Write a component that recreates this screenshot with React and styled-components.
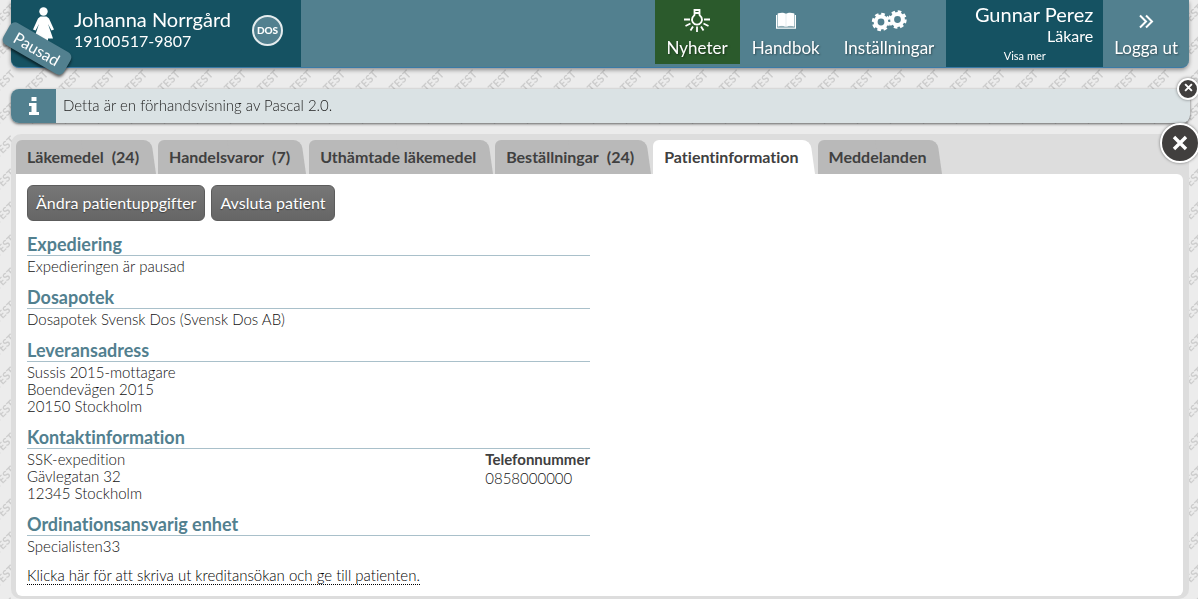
import React from "react";
import styled, { createGlobalStyle, css } from "styled-components";

const GlobalStyle = createGlobalStyle`
  *, *::before, *::after { box-sizing: border-box; }
  body {
    margin: 0;
    background: #ececec;
    color: #111;
    font-family: Lato, "Liberation Sans", sans-serif;
    font-size: 15px;
    line-height: 17px;
    font-variant-ligatures: none;
  }
  button { font: inherit; color: inherit; border: 0; padding: 0; background: none; cursor: pointer; }
  h1, h2, p, dl, dd, address { margin: 0; font-style: normal; }
`;

const Watermark = styled.svg`
  position: fixed;
  inset: 0;
  width: 100%;
  height: 100%;
  z-index: -1;
`;

const Page = styled.div`
  padding: 0 9px 0 11px;
`;

const Header = styled.header`
  display: flex;
  height: 68px;
  color: #fff;
  background: #52808f;
  border-bottom: 1px solid #3a7aa6;
  border-radius: 0 0 8px 8px;
  box-shadow: 0 2px 4px rgba(0, 0, 0, 0.4);
`;

const Patient = styled.section`
  position: relative;
  display: flex;
  width: 290px;
  padding: 7px 18px 0 20px;
  background: #155262;
  border-radius: 0 0 0 8px;
`;

const PatientText = styled.div`
  flex: 1;
  margin-left: 19px;
`;

const Name = styled.h1`
  font-size: 20px;
  line-height: 25px;
  font-weight: 400;
`;

const PersonNumber = styled.p`
  font-size: 16px;
  line-height: 17px;
`;

const DosBadge = styled.span`
  width: 31px;
  height: 31px;
  margin-top: 8px;
  border: 2px solid #e4ecee;
  border-radius: 50%;
  background: #52808f;
  font-size: 10px;
  line-height: 27px;
  font-weight: 900;
  text-align: center;
`;

const PausedRibbon = styled.span`
  position: absolute;
  left: -9px;
  top: 36px;
  width: 70px;
  height: 25px;
  border-radius: 6px;
  background: #52808f;
  box-shadow: 1px 2px 3px rgba(0, 0, 0, 0.6);
  font-size: 16px;
  line-height: 25px;
  text-align: center;
  transform: rotate(30deg);
`;

const Nav = styled.nav`
  display: flex;
  margin-left: auto;
`;

const NavButton = styled.button`
  display: flex;
  flex-direction: column;
  align-items: center;
  height: 64px;
  padding: 8px ${(p) => (p.$tight ? 11 : 12)}px 0;
  font-size: 17px;
  line-height: 22px;
  text-shadow: 1px 1px 2px rgba(0, 0, 0, 0.4);
  background: ${(p) => (p.$active ? "#2b5a2c" : "transparent")};
  svg { height: 26px; margin-bottom: 3px; }
`;

const Profile = styled.section`
  display: flex;
  flex-direction: column;
  width: 157px;
  padding: 2px 10px 0;
  background: #155262;
  text-align: right;
`;

const ProfileName = styled.span`
  font-size: 20px;
  line-height: 25px;
`;

const Role = styled.span`
  font-size: 16px;
  line-height: 18px;
`;

const ShowMore = styled.button`
  align-self: center;
  font-size: 11px;
  line-height: 22px;
`;

const Notice = styled.aside`
  position: relative;
  display: flex;
  height: 34px;
  margin: 21px -1px 0 0;
  border-radius: 8px;
  background: #dae2e4;
  box-shadow: 0 1px 3px rgba(0, 0, 0, 0.6);
  color: #222;
  font-weight: 300;
  line-height: 33px;
`;

const NoticeIcon = styled.span`
  display: flex;
  align-items: center;
  justify-content: center;
  width: 45px;
  margin-right: 7px;
  border-radius: 8px 0 0 8px;
  background: #52808f;
`;

const CloseButton = styled.button`
  position: absolute;
  display: flex;
  align-items: center;
  justify-content: center;
  border: 2px solid #fff;
  border-radius: 50%;
  background: #413f3e;
  box-shadow: 0 0 3px rgba(0, 0, 0, 0.5);
  ${(p) =>
    p.$small
      ? css`width: 22px; height: 22px; top: -11px; right: -9px; padding-bottom: 3px;`
      : css`width: 40px; height: 40px; top: -11px; right: -11px;`}
`;

const Panel = styled.main`
  position: relative;
  margin-top: 11px;
  padding: 6px 6px 3px 5px;
  border-radius: 10px;
  background: #ddd;
`;

const Tabs = styled.div`
  display: flex;
  gap: 3px;
`;

const Tab = styled.button`
  position: relative;
  isolation: isolate;
  display: flex;
  gap: 8px;
  height: 34px;
  padding: 0 16px 0 11px;
  color: #404040;
  font-size: 16px;
  line-height: 34px;
  font-weight: 700;
  --fill: ${(p) => (p.$active ? "#fff" : "#b9b9b9")};
  &::before, &::after {
    content: "";
    position: absolute;
    z-index: -1;
    top: 0;
    bottom: 0;
    background: var(--fill);
  }
  &::before { left: 0; right: 24px; border-radius: 6px 0 0 0; }
  &::after {
    left: 50%;
    right: 0;
    border-radius: 0 8px 0 0;
    transform: skewX(8deg);
    transform-origin: bottom;
  }
`;

const Content = styled.div`
  padding: 11px 11px 11px;
  border-radius: 0 6px 6px 6px;
  background: #fff;
  font-weight: 300;
`;

const Actions = styled.div`
  display: flex;
  gap: 6px;
  margin-bottom: 13px;
`;

const ActionButton = styled.button`
  height: 36px;
  padding: 0 8px 2px;
  border: 1px solid #5c5c5c;
  border-radius: 6px;
  background: linear-gradient(#777, #666);
  color: #fff;
  font-size: 16px;
  font-weight: 400;
  text-shadow: 0 1px 1px rgba(0, 0, 0, 0.4);
`;

const Section = styled.section`
  max-width: 563px;
  margin-bottom: 12px;
`;

const SectionTitle = styled.h2`
  margin-bottom: 2px;
  border-bottom: 1px solid #a9c0ca;
  color: #52808f;
  font-size: 18px;
  line-height: 21px;
  font-weight: 700;
`;

const Columns = styled.div`
  display: flex;
  justify-content: space-between;
`;

const Term = styled.dt`
  margin-bottom: 2px;
  color: #404040;
  font-weight: 700;
`;

const PrintLink = styled.a`
  display: inline-block;
  border-bottom: 1px dotted #000;
  color: #000;
  text-decoration: none;
`;

const CrossIcon = ({ size }) => (
  <svg width={size} height={size} viewBox="0 0 16 16" fill="none" stroke="#fff" strokeWidth="3.4">
    <path d="M2 2l12 12M14 2L2 14" />
  </svg>
);

const WomanIcon = () => (
  <svg width="24" height="34" viewBox="0 0 24 34" fill="#fff">
    <circle cx="12.500" cy="4.500" r="4.200" />
    <path d="M9.500 9.500h6l2.500 2 5 11-2.500 1-3.500-6.500 5 14.500h-5v4H8v-4H3l5-14.500-3.500 6.500-2.500-1 5-11z" />
  </svg>
);

const BulbIcon = () => (
  <svg width="28" height="26" viewBox="0 0 28 26" fill="none" stroke="#fff" strokeWidth="1.8">
    <path d="M11.500 2h5v5l2 2.500a5 5 0 1 1-9 0l2-2.500zM11.500 5h5" />
    <path d="M1 11.500h6M21 11.500h6M2.500 18l5-2.500M25.500 18l-5-2.500M7.500 22.500l2.500-4M20.500 22.500l-2.500-4M14 18.500V24" />
  </svg>
);

const BookIcon = () => (
  <svg width="22" height="26" viewBox="0 0 22 26" fill="#fff">
    <path d="M3 5.500c3-1 6-1 7.700.5v13C8 17.500 6 17.500 3 18.500zM19 5.500c-3-1-6-1-7.700.5v13c2.700-1.500 4.700-1.500 7.700-.5z" />
    <path d="M1 7h1.200v12.500h17.600V7H21v13.800H1z" />
    <path d="M2.500 5.500h17v13h-17z" opacity=".75" />
  </svg>
);

const Gear = ({ x, y }) => (
  <g transform={`translate(${x} ${y})`}>
    <circle r="5.400" fill="none" stroke="#fff" strokeWidth="4" />
    <circle r="8" fill="none" stroke="#fff" strokeWidth="2.400" strokeDasharray="3.600 2.680" />
  </g>
);

const GearsIcon = () => (
  <svg width="36" height="26" viewBox="0 0 36 26">
    <Gear x="10" y="14" />
    <Gear x="26.500" y="11.500" />
  </svg>
);

const LogoutIcon = () => (
  <svg width="16" height="26" viewBox="0 0 16 26" fill="none" stroke="#fff" strokeWidth="2">
    <path d="M2 7.500l6 6-6 6M8 7.500l6 6-6 6" />
  </svg>
);

const InfoIcon = () => (
  <svg width="10" height="18" viewBox="0 0 10 18" fill="#fff">
    <path d="M2.500 0h5v4h-5zM0 6h7.500v9H10v3H0v-3h2.500V9H0z" />
  </svg>
);

const tabs = [
  { label: "Läkemedel", count: 24 },
  { label: "Handelsvaror", count: 7 },
  { label: "Uthämtade läkemedel" },
  { label: "Beställningar", count: 24 },
  { label: "Patientinformation", active: true },
  { label: "Meddelanden" },
];

export default function App() {
  return (
    <>
      <GlobalStyle />
      <Watermark aria-hidden="true">
        <defs>
          <pattern id="test-mark" x="-12" y="64" width="33" height="33" patternUnits="userSpaceOnUse">
            <text x="16" y="21" fill="#cdcdcd" fontSize="11" fontWeight="700" textAnchor="middle" transform="rotate(-45 16 17)">TEST</text>
          </pattern>
        </defs>
        <rect width="100%" height="100%" fill="url(#test-mark)" />
      </Watermark>
      <Page>
        <Header>
          <Patient>
            <WomanIcon />
            <PatientText>
              <Name>Johanna Norrgård</Name>
              <PersonNumber>19100517-9807</PersonNumber>
            </PatientText>
            <DosBadge>DOS</DosBadge>
            <PausedRibbon>Pausad</PausedRibbon>
          </Patient>
          <Nav>
            <NavButton $active><BulbIcon />Nyheter</NavButton>
            <NavButton><BookIcon />Handbok</NavButton>
            <NavButton><GearsIcon />Inställningar</NavButton>
          </Nav>
          <Profile>
            <ProfileName>Gunnar Perez</ProfileName>
            <Role>Läkare</Role>
            <ShowMore>Visa mer</ShowMore>
          </Profile>
          <NavButton $tight><LogoutIcon />Logga ut</NavButton>
        </Header>
        <Notice>
          <NoticeIcon><InfoIcon /></NoticeIcon>
          Detta är en förhandsvisning av Pascal 2.0.
          <CloseButton $small aria-label="Stäng meddelande"><CrossIcon size={9} /></CloseButton>
        </Notice>
        <Panel>
          <Tabs role="tablist">
            {tabs.map((t) => (
              <Tab key={t.label} role="tab" aria-selected={!!t.active} $active={t.active}>
                <span>{t.label}</span>
                {t.count && <span>({t.count})</span>}
              </Tab>
            ))}
          </Tabs>
          <CloseButton aria-label="Stäng"><CrossIcon size={16} /></CloseButton>
          <Content>
            <Actions>
              <ActionButton>Ändra patientuppgifter</ActionButton>
              <ActionButton>Avsluta patient</ActionButton>
            </Actions>
            <Section>
              <SectionTitle>Expediering</SectionTitle>
              <p>Expedieringen är pausad</p>
            </Section>
            <Section>
              <SectionTitle>Dosapotek</SectionTitle>
              <p>Dosapotek Svensk Dos (Svensk Dos AB)</p>
            </Section>
            <Section>
              <SectionTitle>Leveransadress</SectionTitle>
              <address>Sussis 2015-mottagare<br />Boendevägen 2015<br />20150 Stockholm</address>
            </Section>
            <Section>
              <SectionTitle>Kontaktinformation</SectionTitle>
              <Columns>
                <address>SSK-expedition<br />Gävlegatan 32<br />12345 Stockholm</address>
                <dl>
                  <Term>Telefonnummer</Term>
                  <dd>0858000000</dd>
                </dl>
              </Columns>
            </Section>
            <Section>
              <SectionTitle>Ordinationsansvarig enhet</SectionTitle>
              <p>Specialisten33</p>
            </Section>
            <PrintLink href="#kreditansokan">Klicka här för att skriva ut kreditansökan och ge till patienten.</PrintLink>
          </Content>
        </Panel>
      </Page>
    </>
  );
}
